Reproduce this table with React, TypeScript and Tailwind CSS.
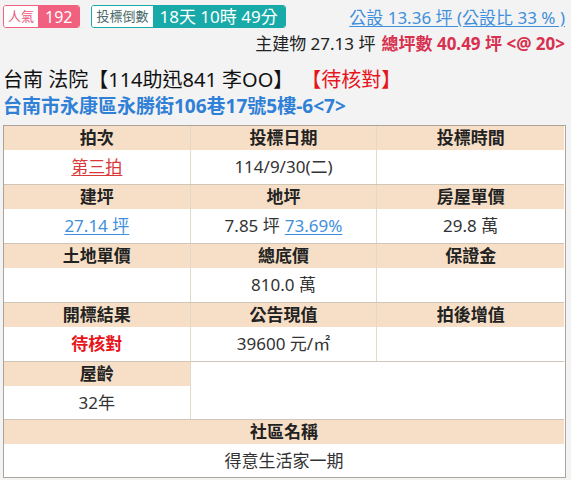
const font = { fontFamily: '"Noto Sans", "Noto Sans CJK TC", sans-serif' };

function Head({ children, className = "" }: { children?: React.ReactNode; className?: string }) {
  return (
    <div className={`h-[24px] flex items-center justify-center bg-[#f6dfc6] font-bold text-[17px] text-[#222] ${className}`}>
      {children}
    </div>
  );
}

function Cell({ children, className = "" }: { children?: React.ReactNode; className?: string }) {
  return (
    <div className={`h-[34px] flex items-center justify-center bg-white text-[17px] text-[#333] ${className}`}>
      {children}
    </div>
  );
}

export default function App() {
  return (
    <div className="w-[571px] h-[480px] bg-[#f3f3f3] overflow-hidden" style={font}>
      <div className="flex items-start justify-between pl-[3px] pr-[6px] pt-[5px]">
        <div className="flex gap-[11px]">
          <div className="flex h-[23px] rounded-[3px] border border-[#f2607f] overflow-hidden">
            <span className="px-[4px] flex items-center bg-white text-[#e9577a] text-[13px]">人氣</span>
            <span className="px-[7px] flex items-center bg-[#f2607f] text-white text-[16px]">192</span>
          </div>
          <div className="flex h-[23px] rounded-[3px] border border-[#17aaa8] overflow-hidden">
            <span className="px-[4px] flex items-center bg-white text-[#4a6a6a] text-[13px]">投標倒數</span>
            <span className="px-[7px] flex items-center bg-[#17aaa8] text-white text-[17px]">18天 10時 49分</span>
          </div>
        </div>
        <a className="mt-[1px] text-[17px] leading-[24px] text-[#3f8fdc] underline underline-offset-2">公設 13.36 坪 (公設比 33 % )</a>
      </div>
      <div className="flex justify-end pr-[6px] mt-[2px] text-[17px] leading-[24px] text-[#222]">
        <span>主建物 27.13 坪</span>
        <span className="ml-[6px] font-bold text-[#d8304f]">總坪數 40.49 坪 &lt;@ 20&gt;</span>
      </div>
      <div className="pl-[3px] mt-[11px] text-[20px] text-[#111] leading-[26px]">
        台南 法院【114助迅841 李OO】<span className="ml-[18px] text-[#e8141b]">【待核對】</span>
      </div>
      <div className="pl-[3px] text-[19px] font-bold text-[#2f80d6] leading-[26px]">台南市永康區永勝街106巷17號5樓-6&lt;7&gt;</div>

      <div className="ml-[3px] mt-[6px] w-[563px] border border-[#aaa49a] pr-[1px] bg-white">
        <div className="grid grid-cols-3 border-b border-[#cfc6b8]">
          <Head className="border-r border-[#e3d9c9]">拍次</Head>
          <Head className="border-r border-[#e3d9c9]">投標日期</Head>
          <Head>投標時間</Head>
          <Cell className="border-r border-[#e3d9c9]"><a className="text-[#d9383a] underline underline-offset-2">第三拍</a></Cell>
          <Cell className="border-r border-[#e3d9c9]">114/9/30(二)</Cell>
          <Cell />
        </div>
        <div className="grid grid-cols-3 border-b border-[#cfc6b8]">
          <Head className="border-r border-[#e3d9c9]">建坪</Head>
          <Head className="border-r border-[#e3d9c9]">地坪</Head>
          <Head>房屋單價</Head>
          <Cell className="border-r border-[#e3d9c9]"><a className="text-[#3f8fdc] underline underline-offset-2">27.14 坪</a></Cell>
          <Cell className="border-r border-[#e3d9c9]">7.85 坪 <a className="ml-[5px] text-[#3f8fdc] underline underline-offset-2">73.69%</a></Cell>
          <Cell>29.8 萬</Cell>
        </div>
        <div className="grid grid-cols-3 border-b border-[#cfc6b8]">
          <Head className="border-r border-[#e3d9c9]">土地單價</Head>
          <Head className="border-r border-[#e3d9c9]">總底價</Head>
          <Head>保證金</Head>
          <Cell className="border-r border-[#e3d9c9]" />
          <Cell className="border-r border-[#e3d9c9]">810.0 萬</Cell>
          <Cell />
        </div>
        <div className="grid grid-cols-3 border-b border-[#cfc6b8]">
          <Head className="border-r border-[#e3d9c9]">開標結果</Head>
          <Head className="border-r border-[#e3d9c9]">公告現值</Head>
          <Head>拍後增值</Head>
          <Cell className="border-r border-[#e3d9c9] text-[#e8141b]! font-bold">待核對</Cell>
          <Cell className="border-r border-[#e3d9c9]">39600 元/㎡</Cell>
          <Cell />
        </div>
        <div className="grid grid-cols-3 border-b border-[#cfc6b8]">
          <div className="border-r border-[#e3d9c9]">
            <Head>屋齡</Head>
            <Cell className="h-[33px]!">32年</Cell>
          </div>
          <div className="col-span-2 bg-white" />
        </div>
        <Head>社區名稱</Head>
        <Cell className="h-[33px]!">得意生活家一期</Cell>
      </div>
    </div>
  );
}
